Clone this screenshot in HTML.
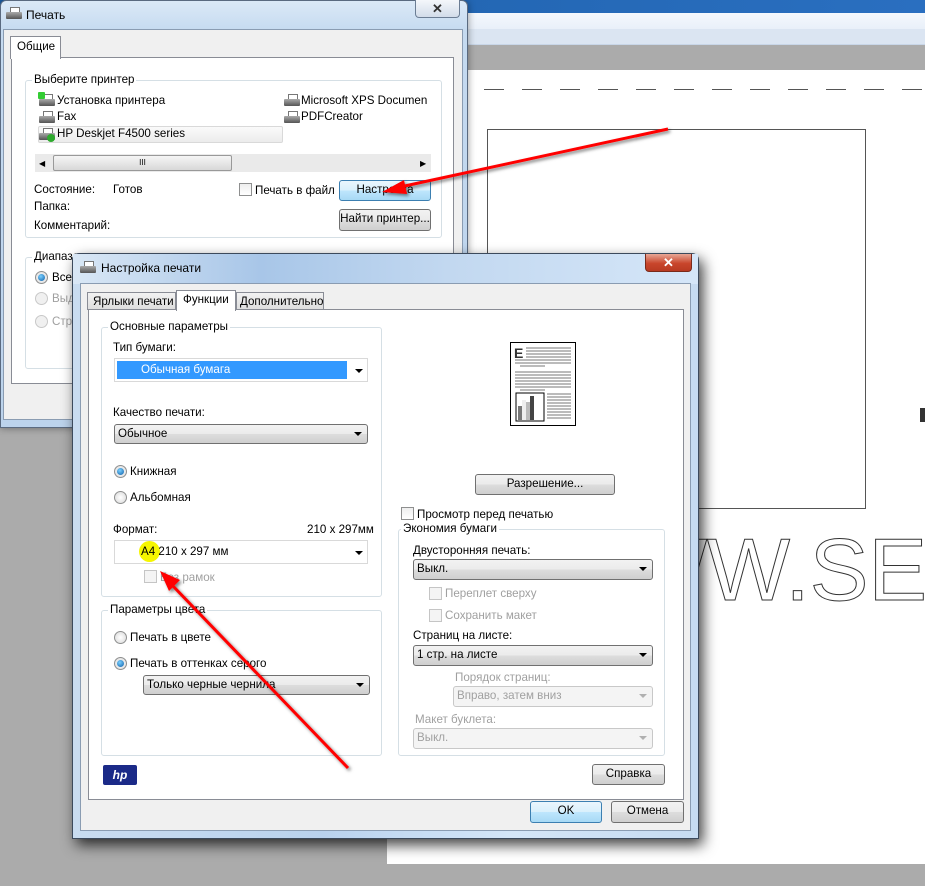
<!DOCTYPE html>
<html><head><meta charset="utf-8">
<style>
*{box-sizing:border-box;margin:0;padding:0}
body{width:925px;height:886px;overflow:hidden;background:#ababab;position:relative;font-family:"Liberation Sans",sans-serif;font-size:11.6px;color:#000}
.a{position:absolute}
.t{position:absolute;white-space:nowrap;line-height:14px}
.dis{color:#a0a0a0}
.grp{position:absolute;border:1px solid #d5dfe5;border-radius:3px}
.gl{position:absolute;top:-8px;left:6px;padding:0 2px;white-space:nowrap;line-height:14px}
.btn{position:absolute;border:1px solid #707070;border-radius:3px;background:linear-gradient(#f2f2f2 0%,#ebebeb 50%,#dddddd 51%,#cfcfcf 100%);text-align:center;line-height:18px;white-space:nowrap}
.cb{position:absolute;border:1px solid #8e8f8f;background:linear-gradient(#eee,#fff);width:13px;height:13px}
.cb.d{border-color:#c5c5c5;background:#f4f4f4}
.combo{position:absolute;border:1px solid #707070;border-radius:3px;background:linear-gradient(#f2f2f2 0%,#ebebeb 50%,#dddddd 51%,#cfcfcf 100%);line-height:18px;padding-left:3px;white-space:nowrap}
.combo.d{background:#f4f4f4;border-color:#c8c8c8;color:#a0a0a0}
.arr{position:absolute;right:5px;top:7px;width:0;height:0;border-left:4px solid transparent;border-right:4px solid transparent;border-top:4px solid #000}
.combo.d .arr{border-top-color:#b0b0b0}
.rad{position:absolute;width:13px;height:13px;border-radius:50%;border:1px solid #8e8f8f;background:radial-gradient(circle,#fff,#d8d8d8)}
.rad.on::after{content:"";position:absolute;left:2px;top:2px;width:7px;height:7px;border-radius:50%;background:radial-gradient(circle at 40% 35%,#7ad0ff,#0e5ea8)}
.rad.d{border-color:#c8c8c8;background:#f0f0f0}
.pr{position:absolute;width:16px;height:14px}
.pr::before{content:"";position:absolute;left:4px;top:0;width:8px;height:5px;background:#fff;border:1px solid #777}
.pr::after{content:"";position:absolute;left:0;top:5px;width:16px;height:7px;background:linear-gradient(#aaa,#555);border-radius:1px}
</style></head><body>

<div class="a" style="left:0;top:0;width:925px;height:13px;background:linear-gradient(90deg,#1d5fa8,#2a6fc0)"></div>
<div class="a" style="left:0;top:13px;width:925px;height:16px;background:linear-gradient(#f4f8fd,#e9f0f9)"></div>
<div class="a" style="left:0;top:29px;width:925px;height:16px;background:#dbe5f2;border-bottom:1px solid #c8d6e8"></div>
<div class="a" style="left:0;top:45px;width:925px;height:25px;background:#ababab"></div>
<div class="a" style="left:387px;top:70px;width:538px;height:794px;background:#fff"></div>
<div class="a" style="left:484px;top:89px;width:441px;height:1px;background:repeating-linear-gradient(90deg,#555 0 20px,transparent 20px 38px)"></div>
<div class="a" style="left:487px;top:129px;width:379px;height:380px;border:1px solid #555"></div>
<div class="t" style="left:624px;top:520px;font-size:88px;line-height:100px;color:transparent;-webkit-text-stroke:1px #333">WW.SEA</div>
<div class="a" style="left:920px;top:408px;width:5px;height:14px;background:#333"></div>

<!-- dialog 1 -->
<div class="a" style="left:0;top:0;width:468px;height:428px;border:1px solid #5a6a80;border-radius:6px 6px 0 0;background:linear-gradient(180deg,#dbe9f7 0,#c5daf0 30px,#bcd3ec 100%);box-shadow:0 0 8px rgba(0,0,0,.4)"></div>
<div class="pr" style="left:6px;top:7px"></div>
<div class="t" style="left:26px;top:8px;font-size:12px">Печать</div>
<div class="a" style="left:415px;top:0;width:45px;height:18px;border:1px solid #6b7d94;border-top:none;border-radius:0 0 4px 4px;background:linear-gradient(#f4f7fb,#d2dcea);text-align:center;font-weight:bold;font-size:13px;line-height:17px;color:#333">✕</div>
<div class="a" style="left:3px;top:29px;width:460px;height:391px;background:#f0f0f0;border:1px solid #8a9cb2"></div>
<div class="a" style="left:11px;top:57px;width:443px;height:327px;background:#fff;border:1px solid #898c95"></div>
<div class="a" style="left:10px;top:36px;width:51px;height:23px;background:#fff;border:1px solid #898c95;border-bottom:none"></div>
<div class="t" style="left:17px;top:40px">Общие</div>
<div class="grp" style="left:25px;top:80px;width:417px;height:158px"><span class="gl" style="background:#fff">Выберите принтер</span></div>
<div class="a" style="left:38px;top:126px;width:245px;height:17px;border:1px solid #d9d9d9;border-radius:2px;background:linear-gradient(#fafafa,#ececec)"></div>
<div class="pr" style="left:39px;top:94px"></div><div class="a" style="left:38px;top:92px;width:7px;height:7px;background:#3c3;border-radius:1px"></div>
<div class="t" style="left:57px;top:94px">Установка принтера</div>
<div class="pr" style="left:39px;top:111px"></div><div class="t" style="left:57px;top:110px">Fax</div>
<div class="pr" style="left:39px;top:128px"></div><div class="a" style="left:47px;top:134px;width:8px;height:8px;border-radius:50%;background:#2eaa2e"></div>
<div class="t" style="left:57px;top:127px">HP Deskjet F4500 series</div>
<div class="pr" style="left:284px;top:94px"></div><div class="t" style="left:301px;top:94px">Microsoft XPS Documen</div>
<div class="pr" style="left:284px;top:111px"></div><div class="t" style="left:301px;top:110px">PDFCreator</div>
<div class="a" style="left:35px;top:154px;width:396px;height:18px;background:#eaeaea"></div>
<div class="a" style="left:53px;top:155px;width:179px;height:16px;border:1px solid #999;border-radius:2px;background:linear-gradient(#f5f5f5,#d8d8d8);text-align:center;font-size:8px;line-height:14px">III</div>
<div class="t" style="left:39px;top:157px;font-size:8px">◀</div><div class="t" style="left:420px;top:157px;font-size:8px">▶</div>
<div class="t" style="left:34px;top:183px">Состояние:</div><div class="t" style="left:113px;top:183px">Готов</div>
<div class="t" style="left:34px;top:200px">Папка:</div>
<div class="t" style="left:34px;top:219px">Комментарий:</div>
<div class="cb" style="left:239px;top:183px"></div><div class="t" style="left:255px;top:184px">Печать в файл</div>
<div class="btn" style="left:339px;top:180px;width:92px;height:21px;border-color:#3c7fb1;background:linear-gradient(#eaf6fd,#d9f0fc 50%,#bee6fd 51%,#a7d9f5)">Настройка</div>
<div class="btn" style="left:339px;top:209px;width:92px;height:22px">Найти принтер...</div>
<div class="grp" style="left:25px;top:257px;width:417px;height:112px"><span class="gl" style="background:#fff">Диапазон</span></div>
<div class="rad on" style="left:35px;top:271px"></div><div class="t" style="left:52px;top:271px">Все</div>
<div class="rad d" style="left:35px;top:292px"></div><div class="t dis" style="left:52px;top:292px">Выделение</div>
<div class="rad d" style="left:35px;top:315px"></div><div class="t dis" style="left:52px;top:315px">Страницы</div>

<!-- dialog 2 -->
<div class="a" style="left:72px;top:253px;width:627px;height:586px;border:1px solid #3c4a5c;border-radius:7px 7px 0 0;background:linear-gradient(90deg,#c9dcf0,#b9d2ee 40%,#d4e6f8 70%,#c6dbf1);box-shadow:4px 6px 14px rgba(0,0,0,.75)"></div>
<div class="a" style="left:73px;top:254px;width:625px;height:30px;background:linear-gradient(90deg,#d9e7f5,#a8c6e8 30%,#c2d8f0 60%,#d5e6f8)"></div>
<div class="pr" style="left:80px;top:261px"></div>
<div class="t" style="left:101px;top:261px;font-size:12px">Настройка печати</div>
<div class="a" style="left:645px;top:254px;width:47px;height:18px;border:1px solid #7a2a1a;border-top:none;border-radius:0 0 4px 4px;background:linear-gradient(#e8a796,#c9462c 55%,#b83a22);text-align:center;font-weight:bold;font-size:13px;line-height:17px;color:#fff">✕</div>
<div class="a" style="left:80px;top:283px;width:611px;height:548px;background:#f0f0f0;border:1px solid #8a9cb2"></div>
<div class="a" style="left:88px;top:309px;width:596px;height:491px;background:#fff;border:1px solid #898c95"></div>
<div class="a" style="left:87px;top:292px;width:89px;height:18px;background:linear-gradient(#f2f2f2,#dedede);border:1px solid #898c95"></div>
<div class="t" style="left:93px;top:295px">Ярлыки печати</div>
<div class="a" style="left:176px;top:290px;width:60px;height:21px;background:#fff;border:1px solid #898c95;border-bottom:none"></div>
<div class="t" style="left:183px;top:293px">Функции</div>
<div class="a" style="left:236px;top:292px;width:88px;height:18px;background:linear-gradient(#f2f2f2,#dedede);border:1px solid #898c95"></div>
<div class="t" style="left:240px;top:295px">Дополнительно</div>

<div class="grp" style="left:101px;top:327px;width:281px;height:270px"><span class="gl" style="background:#fff">Основные параметры</span></div>
<div class="t" style="left:113px;top:341px">Тип бумаги:</div>
<div class="a" style="left:114px;top:358px;width:254px;height:24px;border:1px solid #d9d9d9;background:#fff"></div>
<div class="a" style="left:117px;top:361px;width:230px;height:18px;background:#3399ff"></div>
<div class="t" style="left:141px;top:363px;color:#fff">Обычная бумага</div>
<div class="arr" style="left:355px;top:369px"></div>
<div class="t" style="left:113px;top:406px">Качество печати:</div>
<div class="combo" style="left:114px;top:424px;width:254px;height:20px">Обычное<div class="arr"></div></div>
<div class="rad on" style="left:114px;top:465px"></div><div class="t" style="left:130px;top:465px">Книжная</div>
<div class="rad" style="left:114px;top:491px"></div><div class="t" style="left:130px;top:491px">Альбомная</div>
<div class="t" style="left:113px;top:523px">Формат:</div>
<div class="t" style="left:307px;top:523px">210 x 297мм</div>
<div class="a" style="left:114px;top:540px;width:254px;height:24px;border:1px solid #d9d9d9;background:#fff"></div>
<div class="a" style="left:139px;top:541px;width:21px;height:21px;border-radius:50%;background:#f6f600"></div>
<div class="t" style="left:141px;top:545px">A4 210 x 297 мм</div>
<div class="arr" style="left:355px;top:551px"></div>
<div class="cb d" style="left:144px;top:570px"></div><div class="t dis" style="left:160px;top:571px">Без рамок</div>

<div class="grp" style="left:101px;top:610px;width:281px;height:146px"><span class="gl" style="background:#fff">Параметры цвета</span></div>
<div class="rad" style="left:114px;top:631px"></div><div class="t" style="left:130px;top:631px">Печать в цвете</div>
<div class="rad on" style="left:114px;top:657px"></div><div class="t" style="left:130px;top:657px">Печать в оттенках серого</div>
<div class="combo" style="left:143px;top:675px;width:227px;height:20px">Только черные чернила<div class="arr"></div></div>

<div class="a" style="left:103px;top:765px;width:34px;height:20px;background:#1b2a88;border-radius:2px;color:#fff;font-style:italic;font-weight:bold;text-align:center;line-height:20px;font-size:12px">hp</div>
<div class="btn" style="left:592px;top:764px;width:73px;height:21px">Справка</div>

<svg class="a" style="left:510px;top:342px" width="66" height="84" viewBox="0 0 66 84">
<rect x="0.5" y="0.5" width="65" height="83" fill="#fff" stroke="#000"/>
<text x="4" y="16" font-family="Liberation Sans" font-weight="bold" font-size="14" fill="#333">E</text>
<g stroke="#777" stroke-width="1">
<line x1="16" y1="6" x2="61" y2="6"/><line x1="16" y1="9" x2="61" y2="9"/><line x1="16" y1="12" x2="61" y2="12"/><line x1="16" y1="15" x2="61" y2="15"/>
<line x1="5" y1="18" x2="61" y2="18"/><line x1="5" y1="21" x2="61" y2="21"/><line x1="10" y1="24" x2="35" y2="24"/>
<line x1="5" y1="30" x2="61" y2="30"/><line x1="5" y1="33" x2="61" y2="33"/><line x1="5" y1="36" x2="61" y2="36"/><line x1="5" y1="39" x2="61" y2="39"/><line x1="5" y1="42" x2="61" y2="42"/><line x1="5" y1="45" x2="61" y2="45"/><line x1="10" y1="48" x2="35" y2="48"/>
<line x1="37" y1="52" x2="61" y2="52"/><line x1="37" y1="55" x2="61" y2="55"/><line x1="37" y1="58" x2="61" y2="58"/><line x1="37" y1="61" x2="61" y2="61"/><line x1="37" y1="64" x2="61" y2="64"/><line x1="37" y1="67" x2="61" y2="67"/><line x1="37" y1="70" x2="61" y2="70"/><line x1="37" y1="73" x2="61" y2="73"/><line x1="37" y1="76" x2="61" y2="76"/>
</g>
<rect x="6" y="51" width="28" height="28" fill="#fff" stroke="#000"/>
<rect x="8" y="64" width="4" height="14" fill="#777"/><rect x="12" y="58" width="4" height="20" fill="#eee"/><rect x="16" y="60" width="4" height="18" fill="#bbb"/><rect x="20" y="54" width="4" height="24" fill="#444"/>
</svg>
<div class="btn" style="left:475px;top:474px;width:140px;height:21px">Разрешение...</div>
<div class="cb" style="left:401px;top:507px"></div><div class="t" style="left:417px;top:508px">Просмотр перед печатью</div>
<div class="grp" style="left:398px;top:529px;width:267px;height:227px"><span class="gl" style="left:2px;background:#fff">Экономия бумаги</span></div>
<div class="t" style="left:413px;top:544px">Двусторонняя печать:</div>
<div class="combo" style="left:413px;top:559px;width:240px;height:21px">Выкл.<div class="arr"></div></div>
<div class="cb d" style="left:429px;top:587px"></div><div class="t dis" style="left:445px;top:587px">Переплет сверху</div>
<div class="cb d" style="left:429px;top:609px"></div><div class="t dis" style="left:445px;top:609px">Сохранить макет</div>
<div class="t" style="left:413px;top:629px">Страниц на листе:</div>
<div class="combo" style="left:413px;top:645px;width:240px;height:21px">1 стр. на листе<div class="arr"></div></div>
<div class="t dis" style="left:455px;top:671px">Порядок страниц:</div>
<div class="combo d" style="left:453px;top:686px;width:200px;height:21px">Вправо, затем вниз<div class="arr"></div></div>
<div class="t dis" style="left:415px;top:713px">Макет буклета:</div>
<div class="combo d" style="left:413px;top:728px;width:240px;height:21px">Выкл.<div class="arr"></div></div>

<div class="btn" style="left:530px;top:801px;width:72px;height:22px;border-color:#3c7fb1;background:linear-gradient(#eaf6fd,#d9f0fc 50%,#bee6fd 51%,#a7d9f5)">OK</div>
<div class="btn" style="left:611px;top:801px;width:73px;height:22px">Отмена</div>

<svg class="a" style="left:0;top:0" width="925" height="886">
<defs><filter id="sh"><feDropShadow dx="2" dy="2" stdDeviation="1.5" flood-opacity="0.5"/></filter></defs>
<g filter="url(#sh)" fill="#f00" stroke="#f00">
<line x1="668" y1="129" x2="400" y2="187" stroke-width="3"/>
<polygon points="382,192 404,180 407,194" stroke="none"/>
<line x1="348" y1="768" x2="172" y2="585" stroke-width="3"/>
<polygon points="160,571 180,580 169,591" stroke="none"/>
</g>
</svg>
</body></html>
